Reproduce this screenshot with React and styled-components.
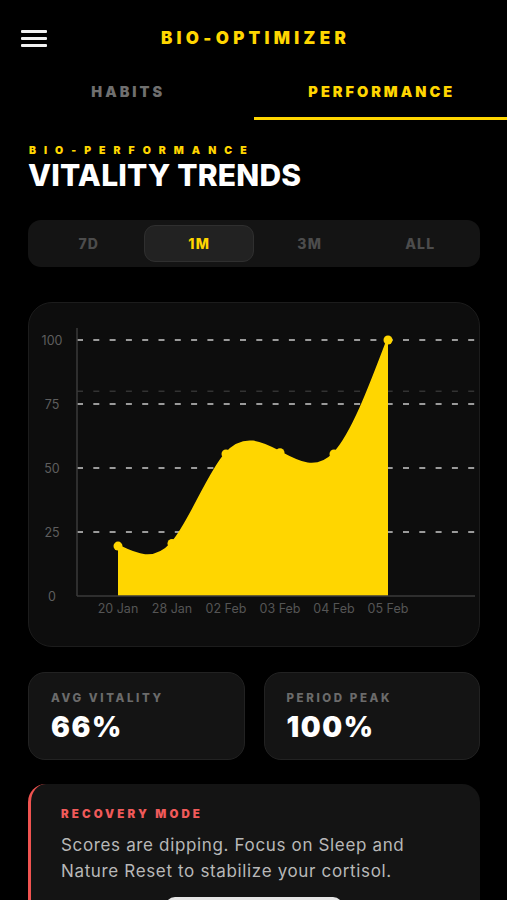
import React from "react";
import styled, { createGlobalStyle } from "styled-components";

const YELLOW = "#FFD600";

const Global = createGlobalStyle`
  html, body { margin: 0; padding: 0; background: #000; }
  body { font-family: Inter, "Liberation Sans", Arial, sans-serif; -webkit-font-smoothing: antialiased; }
  * { box-sizing: border-box; }
`;

const Page = styled.div`
  width: 507px;
  min-height: 900px;
  background: #000;
  color: #fff;
  overflow: hidden;
`;

const Header = styled.header`
  height: 76px;
  display: flex;
  align-items: center;
  position: relative;
  padding: 0 21px;
`;

const Burger = styled.button`
  width: 26px;
  height: 17px;
  padding: 0;
  border: 0;
  background: transparent;
  display: flex;
  flex-direction: column;
  justify-content: space-between;
  cursor: pointer;
  span {
    display: block;
    height: 3px;
    border-radius: 1px;
    background: #f2f2f2;
  }
`;

const Brand = styled.h1`
  position: absolute;
  left: 0;
  right: 0;
  margin: 0;
  text-align: center;
  pointer-events: none;
  font-family: Inter, "DejaVu Sans", sans-serif;
  font-weight: 900;
  font-size: 17px;
  letter-spacing: 4.3px;
  color: ${YELLOW};
  padding-left: 4px;
`;

const Tabs = styled.nav`
  display: grid;
  grid-template-columns: 1fr 1fr;
`;

const Tab = styled.button`
  height: 44px;
  padding: 9px 0 0 3px;
  margin: 0;
  background: transparent;
  border: 0;
  border-bottom: 3px solid ${(p) => (p.$active ? YELLOW : "transparent")};
  display: flex;
  justify-content: center;
  align-items: flex-start;
  font-family: Inter, "DejaVu Sans", sans-serif;
  font-weight: 900;
  font-size: 14.5px;
  line-height: 14px;
  letter-spacing: 3px;
  color: ${(p) => (p.$active ? YELLOW : "#6f6f6f")};
`;

const Content = styled.main`
  padding: 0 27px 0 28px;
`;

const Eyebrow = styled.div`
  margin-top: 25px;
  font-family: Inter, "DejaVu Sans", sans-serif;
  font-weight: 900;
  font-size: 10.5px;
  line-height: 11px;
  letter-spacing: 8px;
  color: ${YELLOW};
  padding-left: 1px;
`;

const Title = styled.h2`
  margin: 2px 0 0;
  font-family: Inter, "Liberation Sans", sans-serif;
  font-weight: 800;
  font-size: 30px;
  line-height: 34px;
  letter-spacing: 0.2px;
  color: #fff;
`;

const Segmented = styled.div`
  margin-top: 28px;
  height: 47px;
  padding: 5px;
  border-radius: 13px;
  background: #141414;
  display: grid;
  grid-template-columns: repeat(4, 1fr);
`;

const Segment = styled.button`
  border-radius: 11px;
  border: 1px solid ${(p) => (p.$active ? "#2f2f2f" : "transparent")};
  background: ${(p) => (p.$active ? "#222222" : "transparent")};
  font-family: Inter, "DejaVu Sans", sans-serif;
  font-weight: 800;
  font-size: 14px;
  letter-spacing: 1.2px;
  color: ${(p) => (p.$active ? YELLOW : "#4c4c4c")};
  display: flex;
  align-items: center;
  justify-content: center;
  padding: 0 0 0 1px;
`;

const ChartCard = styled.section`
  margin-top: 35px;
  height: 345px;
  border-radius: 24px;
  background: #0d0d0d;
  border: 1px solid #1c1c1c;
  overflow: hidden;
  svg { display: block; }
`;

const Stats = styled.div`
  margin-top: 25px;
  display: grid;
  grid-template-columns: 1fr 1fr;
  gap: 19px;
`;

const StatCard = styled.div`
  height: 88px;
  border-radius: 17px;
  background: #141414;
  border: 1px solid #222;
  padding: 19px 22px 0;
`;

const StatLabel = styled.div`
  font-family: Inter, "DejaVu Sans", sans-serif;
  font-weight: 800;
  font-size: 11.5px;
  line-height: 12px;
  letter-spacing: 2.6px;
  color: #6b6b6b;
`;

const StatValue = styled.div`
  margin-top: 9px;
  font-family: Inter, "DejaVu Sans", sans-serif;
  font-weight: 900;
  font-size: 28px;
  line-height: 28px;
  letter-spacing: 1.6px;
  color: #fff;
`;

const Alert = styled.section`
  margin-top: 24px;
  border-radius: 18px;
  background: #141414;
  border-left: 3px solid #ef5350;
  padding: 24px 30px 0;
  min-height: 140px;
  display: flex;
  flex-direction: column;
`;

const AlertLabel = styled.div`
  font-family: Inter, "DejaVu Sans", sans-serif;
  font-weight: 900;
  font-size: 11.5px;
  line-height: 12px;
  letter-spacing: 3.1px;
  color: #f05a5a;
`;

const AlertText = styled.p`
  margin: 12px 0 0;
  font-family: Inter, "Liberation Sans", sans-serif;
  font-weight: 400;
  font-size: 17px;
  line-height: 26px;
  letter-spacing: 0.65px;
  color: #b8b8b8;
`;

const AlertButton = styled.button`
  align-self: flex-start;
  margin: 13px 0 0 104px;
  width: 178px;
  height: 42px;
  border: 0;
  border-radius: 10px;
  background: #e6e6e6;
`;

/* d3 curveNatural control points */
function controlPoints(x) {
  const n = x.length - 1;
  const a = new Array(n), b = new Array(n), r = new Array(n);
  a[0] = 0; b[0] = 2; r[0] = x[0] + 2 * x[1];
  for (let i = 1; i < n - 1; ++i) { a[i] = 1; b[i] = 4; r[i] = 4 * x[i] + 2 * x[i + 1]; }
  a[n - 1] = 2; b[n - 1] = 7; r[n - 1] = 8 * x[n - 1] + x[n];
  for (let i = 1; i < n; ++i) { const m = a[i] / b[i - 1]; b[i] -= m; r[i] -= m * r[i - 1]; }
  a[n - 1] = r[n - 1] / b[n - 1];
  for (let i = n - 2; i >= 0; --i) a[i] = (r[i] - a[i + 1]) / b[i];
  b[n - 1] = (x[n] + a[n - 1]) / 2;
  for (let i = 0; i < n - 1; ++i) b[i] = 2 * x[i + 1] - a[i + 1];
  return [a, b];
}

function naturalPath(pts) {
  const xs = pts.map((p) => p[0]);
  const ys = pts.map((p) => p[1]);
  const px = controlPoints(xs);
  const py = controlPoints(ys);
  let d = `M${xs[0]},${ys[0]}`;
  for (let i = 0; i < xs.length - 1; i++) {
    d += `C${px[0][i]},${py[0][i]} ${px[1][i]},${py[1][i]} ${xs[i + 1]},${ys[i + 1]}`;
  }
  return d;
}

const data = [
  { label: "20 Jan", v: 19.5 },
  { label: "28 Jan", v: 20.5 },
  { label: "02 Feb", v: 55.5 },
  { label: "03 Feb", v: 56 },
  { label: "04 Feb", v: 55.5 },
  { label: "05 Feb", v: 100 },
];

const AX = 48;
const AXR = 446;
const BASE = 293;
const yOf = (v) => BASE - v * 2.56;
const xOf = (i) => 89 + i * 54;

function Chart() {
  const pts = data.map((d, i) => [xOf(i), yOf(d.v)]);
  const line = naturalPath(pts);
  const area = `${line}L${xOf(data.length - 1)},${BASE}L${xOf(0)},${BASE}Z`;
  const ticks = [0, 25, 50, 75, 100];
  return (
    <svg width="450" height="343" viewBox="0 0 450 343">
      {ticks.slice(1).map((t) => (
        <line key={t} x1={AX} x2={AXR} y1={yOf(t)} y2={yOf(t)} stroke="#9a9a9a" strokeWidth="2" strokeDasharray="6 10.3" />
      ))}
      <line x1={AX} x2={AXR} y1={yOf(80)} y2={yOf(80)} stroke="#333" strokeWidth="1.5" strokeDasharray="6 10.3" />
      <path d={area} fill={YELLOW} />
      <path d={line} fill="none" stroke={YELLOW} strokeWidth="3" />
      {pts.map((p, i) => (
        <circle key={i} cx={p[0]} cy={p[1]} r="4.5" fill={YELLOW} />
      ))}
      <line x1={AX} x2={AX} y1={25} y2={BASE} stroke="#3a3a3a" strokeWidth="1.5" />
      <line x1={AX} x2={AXR} y1={BASE} y2={BASE} stroke="#3a3a3a" strokeWidth="1.5" />
      {ticks.map((t) => (
        <text key={t} x={23} y={yOf(t)} dy="4.5" textAnchor="middle" fontSize="12.5" fill="#5e5e5e" fontFamily="Inter, 'Liberation Sans', sans-serif">
          {t}
        </text>
      ))}
      {data.map((d, i) => (
        <text key={d.label} x={xOf(i)} y={310} textAnchor="middle" fontSize="12.5" fill="#555" fontFamily="Inter, 'Liberation Sans', sans-serif">
          {d.label}
        </text>
      ))}
    </svg>
  );
}

export default function App() {
  return (
    <Page>
      <Global />
      <Header>
        <Burger aria-label="Menu">
          <span />
          <span />
          <span />
        </Burger>
        <Brand>BIO-OPTIMIZER</Brand>
      </Header>
      <Tabs>
        <Tab>HABITS</Tab>
        <Tab $active>PERFORMANCE</Tab>
      </Tabs>
      <Content>
        <Eyebrow>BIO-PERFORMANCE</Eyebrow>
        <Title>VITALITY TRENDS</Title>
        <Segmented>
          <Segment>7D</Segment>
          <Segment $active>1M</Segment>
          <Segment>3M</Segment>
          <Segment>ALL</Segment>
        </Segmented>
        <ChartCard>
          <Chart />
        </ChartCard>
        <Stats>
          <StatCard>
            <StatLabel>AVG VITALITY</StatLabel>
            <StatValue>66%</StatValue>
          </StatCard>
          <StatCard>
            <StatLabel>PERIOD PEAK</StatLabel>
            <StatValue>100%</StatValue>
          </StatCard>
        </Stats>
        <Alert>
          <AlertLabel>RECOVERY MODE</AlertLabel>
          <AlertText>
            Scores are dipping. Focus on Sleep and Nature Reset to stabilize your cortisol.
          </AlertText>
          <AlertButton aria-label="Recovery action" />
        </Alert>
      </Content>
    </Page>
  );
}
